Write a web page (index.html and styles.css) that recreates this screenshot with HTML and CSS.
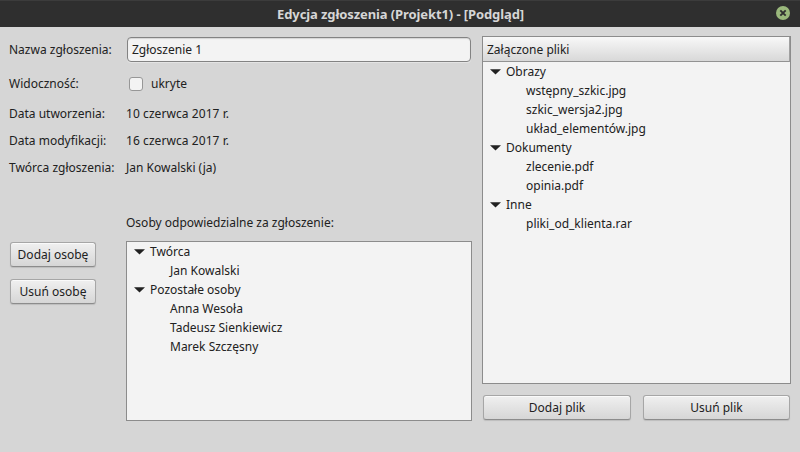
FILE: index.html
```html
<!DOCTYPE html>
<html lang="pl">
<head>
<meta charset="utf-8">
<title>Edycja zgłoszenia</title>
<link rel="stylesheet" href="styles.css">
</head>
<body>
<header class="titlebar">
  <h1 class="title">Edycja zgłoszenia (Projekt1) - [Podgląd]</h1>
  <svg class="close" viewBox="0 0 14 14" width="14" height="14"><circle cx="7" cy="7" r="7" fill="#9ab87c"/><path d="M4.3 4.3l5.4 5.4M9.7 4.3l-5.4 5.4" stroke="#2f2f2f" stroke-width="1.9"/></svg>
</header>
<main class="content">
  <section class="left">
    <div class="row row-name"><span class="label">Nazwa zgłoszenia:</span><div class="input">Zgłoszenie 1</div></div>
    <div class="row row-vis"><span class="label">Widoczność:</span><span class="check"></span><span>ukryte</span></div>
    <div class="row"><span class="label">Data utworzenia:</span><span class="date">10 czerwca 2017 r.</span></div>
    <div class="row"><span class="label">Data modyfikacji:</span><span class="date">16 czerwca 2017 r.</span></div>
    <div class="row"><span class="label">Twórca zgłoszenia:</span><span>Jan Kowalski (ja)</span></div>
    <div class="row row-people"><span class="label"></span><span>Osoby odpowiedzialne za zgłoszenie:</span></div>
    <div class="people">
      <div class="side"><div class="button">Dodaj osobę</div><div class="button">Usuń osobę</div></div>
      <div class="tree">
        <div class="node"><svg class="arrow" viewBox="0 0 11 6" width="11" height="6"><path d="M0 .2h11L5.5 5.5z"/></svg>Twórca</div>
        <div class="leaf">Jan Kowalski</div>
        <div class="node"><svg class="arrow" viewBox="0 0 11 6" width="11" height="6"><path d="M0 .2h11L5.5 5.5z"/></svg>Pozostałe osoby</div>
        <div class="leaf">Anna Wesoła</div>
        <div class="leaf">Tadeusz Sienkiewicz</div>
        <div class="leaf">Marek Szczęsny</div>
      </div>
    </div>
  </section>
  <section class="right">
    <div class="tree files">
      <div class="head">Załączone pliki</div>
      <div class="node"><svg class="arrow" viewBox="0 0 11 6" width="11" height="6"><path d="M0 .2h11L5.5 5.5z"/></svg>Obrazy</div>
      <div class="leaf">wstępny_szkic.jpg</div>
      <div class="leaf">szkic_wersja2.jpg</div>
      <div class="leaf">układ_elementów.jpg</div>
      <div class="node"><svg class="arrow" viewBox="0 0 11 6" width="11" height="6"><path d="M0 .2h11L5.5 5.5z"/></svg>Dokumenty</div>
      <div class="leaf">zlecenie.pdf</div>
      <div class="leaf">opinia.pdf</div>
      <div class="node"><svg class="arrow" viewBox="0 0 11 6" width="11" height="6"><path d="M0 .2h11L5.5 5.5z"/></svg>Inne</div>
      <div class="leaf">pliki_od_klienta.rar</div>
    </div>
    <div class="actions"><div class="button">Dodaj plik</div><div class="button">Usuń plik</div></div>
  </section>
</main>
</body>
</html>
```
FILE: styles.css
```css
* { box-sizing: border-box; }
body {
  margin: 0;
  width: 800px;
  height: 452px;
  overflow: hidden;
  background: #d6d6d6;
  color: #212121;
  font: 12px/19px "Noto Sans", sans-serif;
  white-space: nowrap;
}
.titlebar {
  display: flex;
  align-items: flex-start;
  height: 27px;
  padding: 0 10px 0 24px;
  background: #2f2f2f;
  border-top: 1px solid #3c3c3c;
}
.title {
  flex: 1;
  margin: 0;
  padding: 3px 0 0 1px;
  text-align: center;
  font-size: 13px;
  line-height: 20px;
  font-weight: bold;
  letter-spacing: -0.1px;
  color: #d6d6d6;
}
.close { display: block; margin-top: 5px; }
.content { display: flex; gap: 10px; padding: 9px 9px 0; }
.left { width: 463px; }
.right { width: 309px; }
.row { display: flex; align-items: center; height: 27px; }
.row-vis { height: 37px; padding-top: 4px; }
.row-people { height: 27px; margin: 28px 0 5px; }
.label { width: 117px; flex: none; }
.date { letter-spacing: 0.07px; }
.input {
  flex: 1;
  height: 25px;
  margin: 0 1px;
  padding: 2px 4px;
  border: 1px solid #838383;
  border-radius: 4px;
  background: #f3f3f3;
  box-shadow: 0 1px 0 #e4e4e4, inset 0 1px 1px #d4d4d4;
}
.check {
  width: 14px;
  height: 14px;
  margin: 0 8px 0 3px;
  border: 1px solid #979797;
  border-radius: 3px;
  background: #f3f3f3;
}
.people { display: flex; }
.side { width: 117px; display: grid; gap: 12px; align-content: start; padding: 1px 30px 0 1px; }
.button {
  height: 25px;
  border: 1px solid #a6a6a6;
  border-bottom-color: #8c8c8c;
  border-radius: 3px;
  background: linear-gradient(#f0f0f0, #d6d6d6);
  box-shadow: 0 1px 1px #bdbdbd, inset 0 1px 0 #fafafa;
  line-height: 23px;
  text-align: center;
}
.tree {
  width: 346px;
  height: 180px;
  border: 1px solid #8c8c8c;
  background: #f3f3f3;
}
.files { width: 309px; height: 348px; }
.head {
  height: 25px;
  padding-left: 4px;
  border-right: 1px solid #a0a0a0;
  border-bottom: 1px solid #929292;
  background: linear-gradient(#f8f8f8, #d8d8d8);
  line-height: 25px;
}
.node { display: flex; align-items: center; height: 19px; padding-left: 7px; }
.arrow { display: block; flex: none; margin: 1px 5px 0 0; fill: #212121; }
.leaf { height: 19px; padding-left: 43px; }
.actions { display: grid; grid-template-columns: 148px 147px; gap: 12px; padding: 11px 1px 0; }
```
